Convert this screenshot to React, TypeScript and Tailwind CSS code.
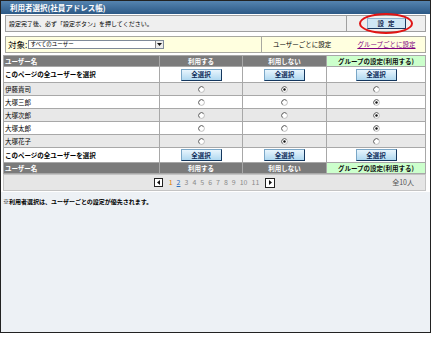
import React from "react";

const Radio = ({ on }: { on?: boolean }) => (
  <svg width="7" height="7" viewBox="0 0 7 7" className="block">
    <circle cx="3.5" cy="3.5" r="2.9" fill="#fff" stroke="#b0b0b0" strokeWidth="0.8" />
    <path d="M1.45 5.55 A2.9 2.9 0 0 1 5.55 1.45" fill="none" stroke="#555" strokeWidth="0.8" />
    {on && <circle cx="3.5" cy="3.5" r="1.2" fill="#111" />}
  </svg>
);

const SelBtn = () => (
  <div className="w-[41px] h-[12px] flex items-center justify-center bg-gradient-to-b from-[#e8f5fd] to-[#b0d8f0] border border-[#7aa6c6] border-r-[#14375e] border-b-[#14375e] text-[6.5px] font-bold text-[#0e2a58] leading-none">
    全選択
  </div>
);

const users: { name: string; v: number; gray: boolean }[] = [
  { name: "伊藤貴司", v: 1, gray: true },
  { name: "大塚三郎", v: 2, gray: false },
  { name: "大塚次郎", v: 2, gray: true },
  { name: "大塚太郎", v: 2, gray: false },
  { name: "大塚花子", v: 1, gray: true },
];

const HeaderRow = () => (
  <>
    <div className="h-[10px] bg-[#7b7b7b] text-white font-bold text-[6.5px] leading-none flex items-center pl-[1px]">ユーザー名</div>
    <div className="h-[10px] bg-[#7b7b7b] text-white font-bold text-[6.5px] leading-none flex items-center justify-center">利用する</div>
    <div className="h-[10px] bg-[#7b7b7b] text-white font-bold text-[6.5px] leading-none flex items-center justify-center">利用しない</div>
    <div className="h-[10px] bg-[#ccffcc] text-[#111] font-bold text-[6.5px] leading-none flex items-center justify-center">グループの設定(利用する)</div>
  </>
);

const SelectRow = ({ h }: { h: string }) => (
  <>
    <div className={`${h} bg-white text-black font-bold text-[6.5px] leading-none flex items-center pl-[1px]`}>このページの全ユーザーを選択</div>
    <div className={`${h} bg-white flex items-center justify-center`}><SelBtn /></div>
    <div className={`${h} bg-white flex items-center justify-center`}><SelBtn /></div>
    <div className={`${h} bg-white flex items-center justify-center`}><SelBtn /></div>
  </>
);

export default function App() {
  return (
    <div className="w-[436px] h-[338px] bg-white relative font-['Noto_Sans_CJK_JP',sans-serif] text-black">
      <div className="w-[431px] h-[333px] border border-[#222] flex flex-col bg-[#edf1f5]">
        <div className="h-[13px] shrink-0 bg-gradient-to-b from-[#5584b0] to-[#2c5986] text-white font-bold text-[7.5px] leading-none pl-[9px] flex items-center">
          利用者選択(社員アドレス帳)
        </div>
        <div className="bg-white pl-[2px] pr-[4px] pt-[1px] flex flex-col">
          <div className="ml-[2px] h-[17px] flex border border-[#a0a0a0] bg-[#efefef]">
            <div className="flex-1 flex items-center pl-[3px] text-[6px] leading-none">設定完了後、必ず「設定ボタン」を押してください。</div>
            <div className="w-[79px] border-l border-[#a0a0a0] flex items-center justify-center">
              <div className="w-[39px] h-[11px] flex items-center justify-center gap-[4px] bg-[#cfe7f5] border border-[#8eb3cf] border-r-[#1b3a60] border-b-[#1b3a60] text-[6.5px] font-bold text-[#13284f] leading-none">
                <span>設</span>
                <span>定</span>
              </div>
            </div>
          </div>
          <div className="ml-[2px] mt-[4px] h-[17px] flex border border-[#a8a8a0] bg-[#ffffdf]">
            <div className="w-[255px] flex items-center pl-[2px]">
              <span className="text-[8.5px] leading-none">対象:</span>
              <div className="ml-[1px] w-[136px] h-[9px] bg-white border border-[#7f8a99] flex items-center">
                <span className="flex-1 text-[5.5px] leading-none pl-[1px]">すべてのユーザー</span>
                <div className="w-[8px] h-full bg-[#ececec] border-l border-[#888] flex items-center justify-center">
                  <svg width="5" height="3" viewBox="0 0 5 3"><path d="M0 0 H5 L2.5 3 Z" fill="#111" /></svg>
                </div>
              </div>
            </div>
            <div className="flex-1 border-l border-[#a8a8a0] flex items-center pl-[11px] gap-[26px] text-[6.5px] leading-none">
              <span>ユーザーごとに設定</span>
              <span className="text-[#800080] underline">グループごとに設定</span>
            </div>
          </div>
          <div className="mt-[2px] grid grid-cols-[155px_82px_83px_98px] gap-px bg-[#a8a8a8] border border-[#a8a8a8]">
            <HeaderRow />
            <SelectRow h="h-[15px]" />
            {users.map((u) => (
              <React.Fragment key={u.name}>
                <div className={`h-[12px] ${u.gray ? "bg-[#e8e8e8]" : "bg-white"} text-[6.5px] leading-none flex items-center pl-[1px]`}>{u.name}</div>
                {[0, 1, 2].map((i) => (
                  <div key={i} className={`h-[12px] ${u.gray ? "bg-[#e8e8e8]" : "bg-white"} flex items-center justify-center`}>
                    <Radio on={u.v === i} />
                  </div>
                ))}
              </React.Fragment>
            ))}
            <SelectRow h="h-[14px]" />
            <HeaderRow />
          </div>
          <div className="h-[17px] border border-[#c4c4c4] bg-[#e6e6e6] flex items-center relative">
            <div className="flex-1 flex items-center justify-center gap-[4px] text-[7px] leading-none text-[#8a8a8a]">
              <div className="w-[9px] h-[9px] bg-white border border-[#222] flex items-center justify-center mr-[2px]">
                <svg width="3" height="5" viewBox="0 0 3 5"><path d="M3 0 V5 L0 2.5 Z" fill="#111" /></svg>
              </div>
              <span className="text-[#e07b00]">1</span>
              <span className="text-[#2a6ec0] underline">2</span>
              <span>3</span>
              <span>4</span>
              <span>5</span>
              <span>6</span>
              <span>7</span>
              <span>8</span>
              <span>9</span>
              <span>10</span>
              <span>11</span>
              <div className="w-[10px] h-[10px] bg-white border border-[#222] flex items-center justify-center ml-[2px]">
                <svg width="3" height="5" viewBox="0 0 3 5"><path d="M0 0 V5 L3 2.5 Z" fill="#111" /></svg>
              </div>
            </div>
            <span className="absolute right-[11px] text-[7px] leading-none text-[#555]">全10人</span>
          </div>
          <div className="h-[1px]" />
        </div>
        <div className="flex-1 pl-[2px] pt-[7px]">
          <div className="text-[6px] leading-none font-bold">※利用者選択は、ユーザーごとの設定が優先されます。</div>
        </div>
      </div>
      <div className="absolute left-[359px] top-[13px] w-[54px] h-[21px] rounded-[50%] border-2 border-[#e01515]" />
    </div>
  );
}
